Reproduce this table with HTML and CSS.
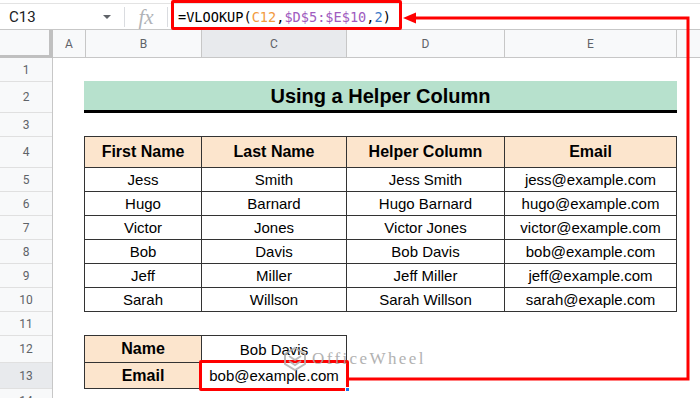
FILE: index.html
```html
<!DOCTYPE html>
<html>
<head>
<meta charset="utf-8">
<link rel="stylesheet" href="styles.css">
</head>
<body>
<div class="app">
  <div class="top">
    <div class="fbar">
      <div class="namebox"><span class="ref">C13</span><span class="caret"></span></div>
      <div class="sep"></div>
      <div class="fx">fx</div>
      <div class="sep"></div>
      <div class="formula"><span class="fbox"></span>=VLOOKUP(<span class="c-or">C12</span>,<span class="c-pu">$D$5:$E$10</span>,<span class="c-bl">2</span>)</div>
    </div>
  </div>
  <div class="colhead">
    <div class="corner"></div>
    <div class="ch w-a">A</div>
    <div class="ch w-b">B</div>
    <div class="ch w-c sel">C</div>
    <div class="ch w-d">D</div>
    <div class="ch w-e">E</div>
    <div class="ch w-f"></div>
  </div>
  <div class="grid">
    <div class="rowhead">
      <div class="rh h24">1</div>
      <div class="rh h31">2</div>
      <div class="rh h24">3</div>
      <div class="rh h31">4</div>
      <div class="rh h24">5</div>
      <div class="rh h24">6</div>
      <div class="rh h24">7</div>
      <div class="rh h24">8</div>
      <div class="rh h24">9</div>
      <div class="rh h24">10</div>
      <div class="rh h24">11</div>
      <div class="rh h27">12</div>
      <div class="rh h26 sel">13</div>
      <div class="rh h24">14</div>
    </div>
    <div class="body">
      <div class="title">Using a Helper Column</div>
      <div class="tbl">
        <div class="th">First Name</div><div class="th">Last Name</div><div class="th">Helper Column</div><div class="th">Email</div>
        <div class="td">Jess</div><div class="td">Smith</div><div class="td">Jess Smith</div><div class="td">jess@example.com</div>
        <div class="td">Hugo</div><div class="td">Barnard</div><div class="td">Hugo Barnard</div><div class="td">hugo@example.com</div>
        <div class="td">Victor</div><div class="td">Jones</div><div class="td">Victor Jones</div><div class="td">victor@example.com</div>
        <div class="td">Bob</div><div class="td">Davis</div><div class="td">Bob Davis</div><div class="td">bob@example.com</div>
        <div class="td">Jeff</div><div class="td">Miller</div><div class="td">Jeff Miller</div><div class="td">jeff@example.com</div>
        <div class="td">Sarah</div><div class="td">Willson</div><div class="td">Sarah Willson</div><div class="td">sarah@exaple.com</div>
      </div>
      <div class="lookup">
        <div class="th r1">Name</div><div class="td r1">Bob Davis</div>
        <div class="th r2">Email</div><div class="td r2 active">bob@example.com<span class="selbox"><span class="handle"></span></span></div>
      </div>
    </div>
  </div>
  <div class="wm">
    <svg class="wm-logo" width="24" height="26" viewBox="0 0 24 26">
      <path d="M12 2 L22 8 L22 18 L12 24 L2 18 L2 8 Z" fill="none" stroke="#b0b0b0" stroke-width="2"/>
      <path d="M6 10 L12 14 L18 10 M6 15 L12 19 L18 15" fill="none" stroke="#b0b0b0" stroke-width="2"/>
    </svg>
    <span class="wm-text">OfficeWheel</span>
  </div>
  <svg class="arrow" width="700" height="398" viewBox="0 0 700 398">
    <polyline points="349,379 688,379 688,18 414,18" fill="none" stroke="#ff0000" stroke-width="3"/>
    <polygon points="403,18 416,12.5 416,23.5" fill="#ff0000"/>
  </svg>
</div>
</body>
</html>
```
FILE: styles.css
```css
* { box-sizing: border-box; }
html, body { margin: 0; padding: 0; background: #fff; }
body { width: 700px; height: 398px; overflow: hidden; font-family: "Liberation Sans", Arial, sans-serif; }
.app { position: relative; width: 700px; height: 398px; overflow: hidden; }

.top { padding-top: 3px; height: 30px; border-bottom: 1px solid #c7c7c7; }
.fbar { display: flex; align-items: center; height: 26px; border-top: 1px solid #e3e3e3; }
.namebox { width: 124px; display: flex; align-items: center; padding-left: 9px; }
.ref { font-family: Roboto, "Liberation Sans", sans-serif; font-size: 15px; color: #202124; flex: 1; }
.caret { width: 0; height: 0; border-left: 4px solid transparent; border-right: 4px solid transparent; border-top: 4px solid #5f6368; margin-right: 13px; }
.sep { width: 1px; height: 20px; background: #dadce0; }
.fx { width: 42px; text-align: center; font-family: "Liberation Serif", serif; font-style: italic; font-size: 21px; color: #b0b3b8; line-height: 24px; }
.formula { position: relative; margin-left: 10px; font-family: "DejaVu Sans Mono", monospace; font-size: 13.6px; color: #000; letter-spacing: 0; line-height: 20px; }
.fbox { position: absolute; left: -7px; top: -7px; width: 231px; height: 30px; border: 3px solid #ff0000; border-radius: 2px; }
.c-or { color: #f29b3f; }
.c-pu { color: #a05cc0; }
.c-bl { color: #3a78c8; }

.colhead { display: flex; height: 28px; background: #f8f9fa; border-bottom: 1px solid #c7c7c7; }
.corner { width: 53px; border-right: 4px solid #c0c0c0; border-bottom: 3px solid #c0c0c0; margin-bottom: -1px; background: #f8f9fa; }
.ch { display: flex; align-items: center; justify-content: center; font-family: Roboto, "Liberation Sans", sans-serif; font-size: 12px; color: #5f6368; border-right: 1px solid #c7c7c7; }
.ch.sel { background: #e8eaed; }
.w-a { width: 33px; }
.w-b { width: 116px; }
.w-c { width: 145px; }
.w-d { width: 158px; }
.w-e { width: 172px; }
.w-f { flex: 1; border-right: none; }

.grid { display: flex; }
.rowhead { width: 53px; background: #f8f9fa; border-right: 1px solid #c7c7c7; }
.rh { display: flex; align-items: center; justify-content: center; font-family: Roboto, "Liberation Sans", sans-serif; font-size: 12px; color: #5f6368; border-bottom: 1px solid #e0e0e0; }
.rh.sel { background: #e8eaed; }
.h24 { height: 24px; }
.h26 { height: 26px; }
.h27 { height: 27px; }
.h31 { height: 31px; }

.body { flex: 1; padding-left: 31px; }
.title { margin-top: 23px; width: 593px; height: 32px; background: #b7e1cd; border-bottom: 3px solid #000; font-weight: bold; font-size: 20px; color: #000; display: flex; align-items: center; justify-content: center; padding-top: 2px; }
.tbl { margin-top: 23px; width: 593px; display: grid; grid-template-columns: 116px 144px 157px 171px; grid-template-rows: 30px repeat(6, 23px); gap: 1px; padding: 1px; background: #333; }
.th { background: #fce5cd; font-weight: bold; font-size: 16px; color: #000; display: flex; align-items: center; justify-content: center; }
.td { background: #fff; font-size: 15px; color: #000; display: flex; align-items: center; justify-content: center; }
.lookup { margin-top: 23px; width: 263px; display: grid; grid-template-columns: 116px 144px; grid-template-rows: 26px 25px; gap: 1px; padding: 1px; background: #333; }
.active { position: relative; }
.selbox { position: absolute; left: -3px; top: -3px; right: -3px; bottom: -3px; border: 3px solid #ff0000; border-radius: 2px; }
.handle { position: absolute; right: -4px; bottom: -4px; width: 5px; height: 5px; background: #1a73e8; border: 1px solid #fff; }

.wm { position: absolute; left: 283px; top: 346px; display: flex; align-items: center; gap: 5px; opacity: 0.85; }
.wm-text { font-family: "Liberation Serif", serif; font-size: 17px; letter-spacing: 2.4px; color: #a5a5a5; }
.arrow { position: absolute; left: 0; top: 0; pointer-events: none; }
```
